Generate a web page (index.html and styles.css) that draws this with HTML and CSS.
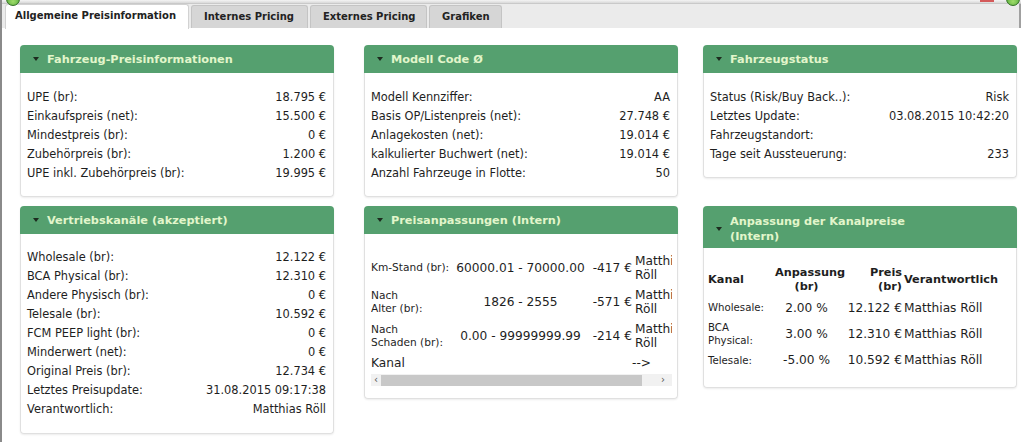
FILE: index.html
```html
<!DOCTYPE html>
<html lang="de">
<head>
<meta charset="utf-8">
<title>Preisinformation</title>
<link rel="stylesheet" href="styles.css">
</head>
<body>
<div class="frame">
  <div class="topstrip"></div>
  <span class="dot dot-left"></span>
  <span class="dot dot-right"></span>
  <span class="mark-red"></span>
  <div class="tabbar">
    <div class="tab active">Allgemeine Preisinformation</div>
    <div class="tab">Internes Pricing</div>
    <div class="tab">Externes Pricing</div>
    <div class="tab">Grafiken</div>
  </div>
  <div class="content">
    <div class="grid">
      <section class="panel">
        <header class="ph"><span class="tri"></span><h2>Fahrzeug-Preisinformationen</h2></header>
        <div class="pb">
          <div class="row"><span>UPE (br):</span><span>18.795 €</span></div>
          <div class="row"><span>Einkaufspreis (net):</span><span>15.500 €</span></div>
          <div class="row"><span>Mindestpreis (br):</span><span>0 €</span></div>
          <div class="row"><span>Zubehörpreis (br):</span><span>1.200 €</span></div>
          <div class="row"><span>UPE inkl. Zubehörpreis (br):</span><span>19.995 €</span></div>
        </div>
      </section>
      <section class="panel">
        <header class="ph"><span class="tri"></span><h2>Modell Code Ø</h2></header>
        <div class="pb">
          <div class="row"><span>Modell Kennziffer:</span><span>AA</span></div>
          <div class="row"><span>Basis OP/Listenpreis (net):</span><span>27.748 €</span></div>
          <div class="row"><span>Anlagekosten (net):</span><span>19.014 €</span></div>
          <div class="row"><span>kalkulierter Buchwert (net):</span><span>19.014 €</span></div>
          <div class="row"><span>Anzahl Fahrzeuge in Flotte:</span><span>50</span></div>
        </div>
      </section>
      <section class="panel">
        <header class="ph"><span class="tri"></span><h2>Fahrzeugstatus</h2></header>
        <div class="pb">
          <div class="row"><span>Status (Risk/Buy Back..):</span><span>Risk</span></div>
          <div class="row"><span>Letztes Update:</span><span>03.08.2015 10:42:20</span></div>
          <div class="row"><span>Fahrzeugstandort:</span><span></span></div>
          <div class="row"><span>Tage seit Aussteuerung:</span><span>233</span></div>
        </div>
      </section>

      <section class="panel">
        <header class="ph"><span class="tri"></span><h2>Vertriebskanäle (akzeptiert)</h2></header>
        <div class="pb tall">
          <div class="row"><span>Wholesale (br):</span><span>12.122 €</span></div>
          <div class="row"><span>BCA Physical (br):</span><span>12.310 €</span></div>
          <div class="row"><span>Andere Physisch (br):</span><span>0 €</span></div>
          <div class="row"><span>Telesale (br):</span><span>10.592 €</span></div>
          <div class="row"><span>FCM PEEP light (br):</span><span>0 €</span></div>
          <div class="row"><span>Minderwert (net):</span><span>0 €</span></div>
          <div class="row"><span>Original Preis (br):</span><span>12.734 €</span></div>
          <div class="row"><span>Letztes Preisupdate:</span><span>31.08.2015 09:17:38</span></div>
          <div class="row"><span>Verantwortlich:</span><span>Matthias Röll</span></div>
        </div>
      </section>
      <section class="panel">
        <header class="ph"><span class="tri"></span><h2>Preisanpassungen (Intern)</h2></header>
        <div class="pb adj">
          <div class="scrollarea">
            <table class="adjtable">
              <tr>
                <td class="lbl nowrap">Km-Stand (br):</td>
                <td class="rng">60000.01 - 70000.00</td>
                <td class="amt">-417 €</td>
                <td class="who">Matthias<br>Röll</td>
              </tr>
              <tr>
                <td class="lbl">Nach<br>Alter (br):</td>
                <td class="rng">1826 - 2555</td>
                <td class="amt">-571 €</td>
                <td class="who">Matthias<br>Röll</td>
              </tr>
              <tr>
                <td class="lbl">Nach<br>Schaden (br):</td>
                <td class="rng">0.00 - 99999999.99</td>
                <td class="amt">-214 €</td>
                <td class="who">Matthias<br>Röll</td>
              </tr>
              <tr class="kanal">
                <td class="big">Kanal</td>
                <td></td>
                <td></td>
                <td class="who">--&gt;</td>
              </tr>
            </table>
          </div>
          <div class="hscroll">
            <span class="arr">‹</span>
            <span class="thumb"></span>
            <span class="arr">›</span>
          </div>
        </div>
      </section>
      <section class="panel">
        <header class="ph two"><span class="tri"></span><h2 class="narrow">Anpassung der Kanalpreise (Intern)</h2></header>
        <div class="pb chan">
          <table class="chantable">
            <tr class="head">
              <th class="c1">Kanal</th>
              <th class="c2">Anpassung<br>(br)</th>
              <th class="c3">Preis<br>(br)</th>
              <th class="c4">Verantwortlich</th>
            </tr>
            <tr>
              <td class="c1 small">Wholesale:</td>
              <td class="c2">2.00 %</td>
              <td class="c3">12.122 €</td>
              <td class="c4">Matthias Röll</td>
            </tr>
            <tr>
              <td class="c1 small">BCA<br>Physical:</td>
              <td class="c2">3.00 %</td>
              <td class="c3">12.310 €</td>
              <td class="c4">Matthias Röll</td>
            </tr>
            <tr>
              <td class="c1 small">Telesale:</td>
              <td class="c2">-5.00 %</td>
              <td class="c3">10.592 €</td>
              <td class="c4">Matthias Röll</td>
            </tr>
          </table>
        </div>
      </section>
    </div>
  </div>
</div>
</body>
</html>
```
FILE: styles.css
```css
* { box-sizing: border-box; }
html, body { margin: 0; padding: 0; background: #ffffff; }
body {
  font-family: "DejaVu Sans", Verdana, sans-serif;
  color: #1e1e1e;
  width: 1024px;
  height: 442px;
  overflow: hidden;
}
.frame {
  position: relative;
  height: 442px;
  border-left: 2px solid #8a8a8a;
}
.topstrip {
  height: 4px;
  background: linear-gradient(#f4f4f4, #d9d9d9);
  margin-right: 3px;
  border-bottom: 1px solid #c9c9c9;
}
.dot {
  position: absolute;
  width: 14px;
  height: 14px;
  border-radius: 50%;
  background: radial-gradient(circle at 50% 70%, #9fdc6a, #3f9a2a);
  border: 1px solid #2f6f22;
  top: -8px;
}
.dot-left { left: 4px; }
.dot-right { left: 1004px; }
.mark-red {
  position: absolute;
  left: 978px;
  top: 0;
  width: 14px;
  height: 2px;
  background: #d45a5a;
}
.tabbar {
  display: flex;
  align-items: flex-end;
  gap: 2px;
  height: 24px;
  padding-left: 3px;
  background: #ebebeb;
  margin-right: 3px;
  border-right: 2px solid #a0a0a0;
}
.tab {
  height: 23px;
  padding: 0 12px;
  font-size: 10px;
  font-weight: bold;
  line-height: 22px;
  color: #222;
  background: #d6d6d6;
  border: 1px solid #c4c4c4;
  border-bottom: none;
  border-radius: 3px 3px 0 0;
  white-space: nowrap;
}
.tab:nth-child(2) { width: 117px; }
.tab:nth-child(3) { width: 117px; }
.tab:nth-child(4) { width: 73px; }
.tab.active {
  width: 184px;
  height: 25px;
  padding: 0 9px;
  margin-bottom: -1px;
  background: #ffffff;
  border-color: #d2d2d2;
}
.content {
  padding: 17px 0 0 18px;
}
.grid {
  display: grid;
  grid-template-columns: 344px 339px 314px;
  row-gap: 9px;
  align-items: start;
}
.panel {
  width: 314px;
  border-radius: 4px;
  box-shadow: 0 1px 2px rgba(0,0,0,0.08);
}
.ph {
  display: flex;
  align-items: center;
  height: 28px;
  padding-left: 13px;
  background: #55a06f;
  border-radius: 4px 4px 0 0;
}
.ph.two { height: 42px; padding-top: 3px; }
.tri {
  width: 0;
  height: 0;
  border-left: 3px solid transparent;
  border-right: 3px solid transparent;
  border-top: 4px solid #1d2b1f;
  margin-right: 8px;
  flex: none;
}
.ph h2 {
  margin: 0;
  font-size: 11.3px;
  font-weight: bold;
  color: #e2f6cb;
  line-height: 15px;
  white-space: nowrap;
}
.ph h2.narrow { white-space: normal; width: 180px; }
.pb {
  border: 1px solid #e0e0e0;
  border-top: none;
  border-radius: 0 0 4px 4px;
  padding: 15px 7px 13px 6px;
  font-size: 11.4px;
  line-height: 19px;
}
.row {
  display: flex;
  justify-content: space-between;
  white-space: nowrap;
}
.pb.tall { padding-top: 14px; padding-bottom: 14px; }

/* Preisanpassungen */
.pb.adj { padding: 17px 5px 12px 6px; }
.scrollarea {
  overflow: hidden;
  width: 301px;
}
.adjtable {
  border-collapse: collapse;
  width: 360px;
  table-layout: fixed;
}
.adjtable td {
  padding: 2px 0;
  vertical-align: middle;
  line-height: 14px;
}
.adjtable .lbl { width: 84px; font-size: 10.6px; line-height: 13.5px; }
.adjtable .nowrap { white-space: nowrap; }
.adjtable .rng { width: 131px; font-size: 12.2px; text-align: center; white-space: nowrap; }
.adjtable .amt { width: 46px; font-size: 12.2px; text-align: right; white-space: nowrap; }
.adjtable .who { width: 99px; font-size: 12.2px; padding-left: 3px; }
.adjtable tr { height: 34px; }
.adjtable tr.kanal { height: 19px; }
.adjtable tr.kanal td { padding: 0; }
.adjtable .big { font-size: 12.2px; }
.hscroll {
  display: flex;
  align-items: center;
  height: 12px;
  width: 301px;
  background: #f1f1f1;
  margin-top: 2px;
}
.hscroll .arr {
  width: 10px;
  text-align: center;
  font-size: 10px;
  line-height: 12px;
  color: #555;
  flex: none;
}
.hscroll .thumb {
  flex: none;
  width: 261px;
  height: 11px;
  background: #c8c8c8;
}
.hscroll .arr:last-child { margin-left: auto; margin-right: 4px; }

/* Kanalpreise */
.pb.chan { padding: 17px 5px 14px 4px; }
.chantable {
  border-collapse: collapse;
  table-layout: fixed;
  width: 300px;
}
.chantable th, .chantable td {
  padding: 0;
  vertical-align: middle;
}
.chantable th {
  font-size: 11.3px;
  font-weight: bold;
  line-height: 14px;
}
.chantable tr.head { height: 30px; }
.chantable tr { height: 25.5px; }
.chantable td { font-size: 12.2px; line-height: 14px; white-space: nowrap; }
.chantable .c1 { width: 67px; text-align: left; }
.chantable .c2 { width: 63px; text-align: center; }
.chantable .c3 { width: 64px; text-align: right; }
.chantable .c4 { width: 106px; text-align: left; padding-left: 2px; }
.chantable td.small { font-size: 10.2px; line-height: 13.5px; white-space: normal; }
```
